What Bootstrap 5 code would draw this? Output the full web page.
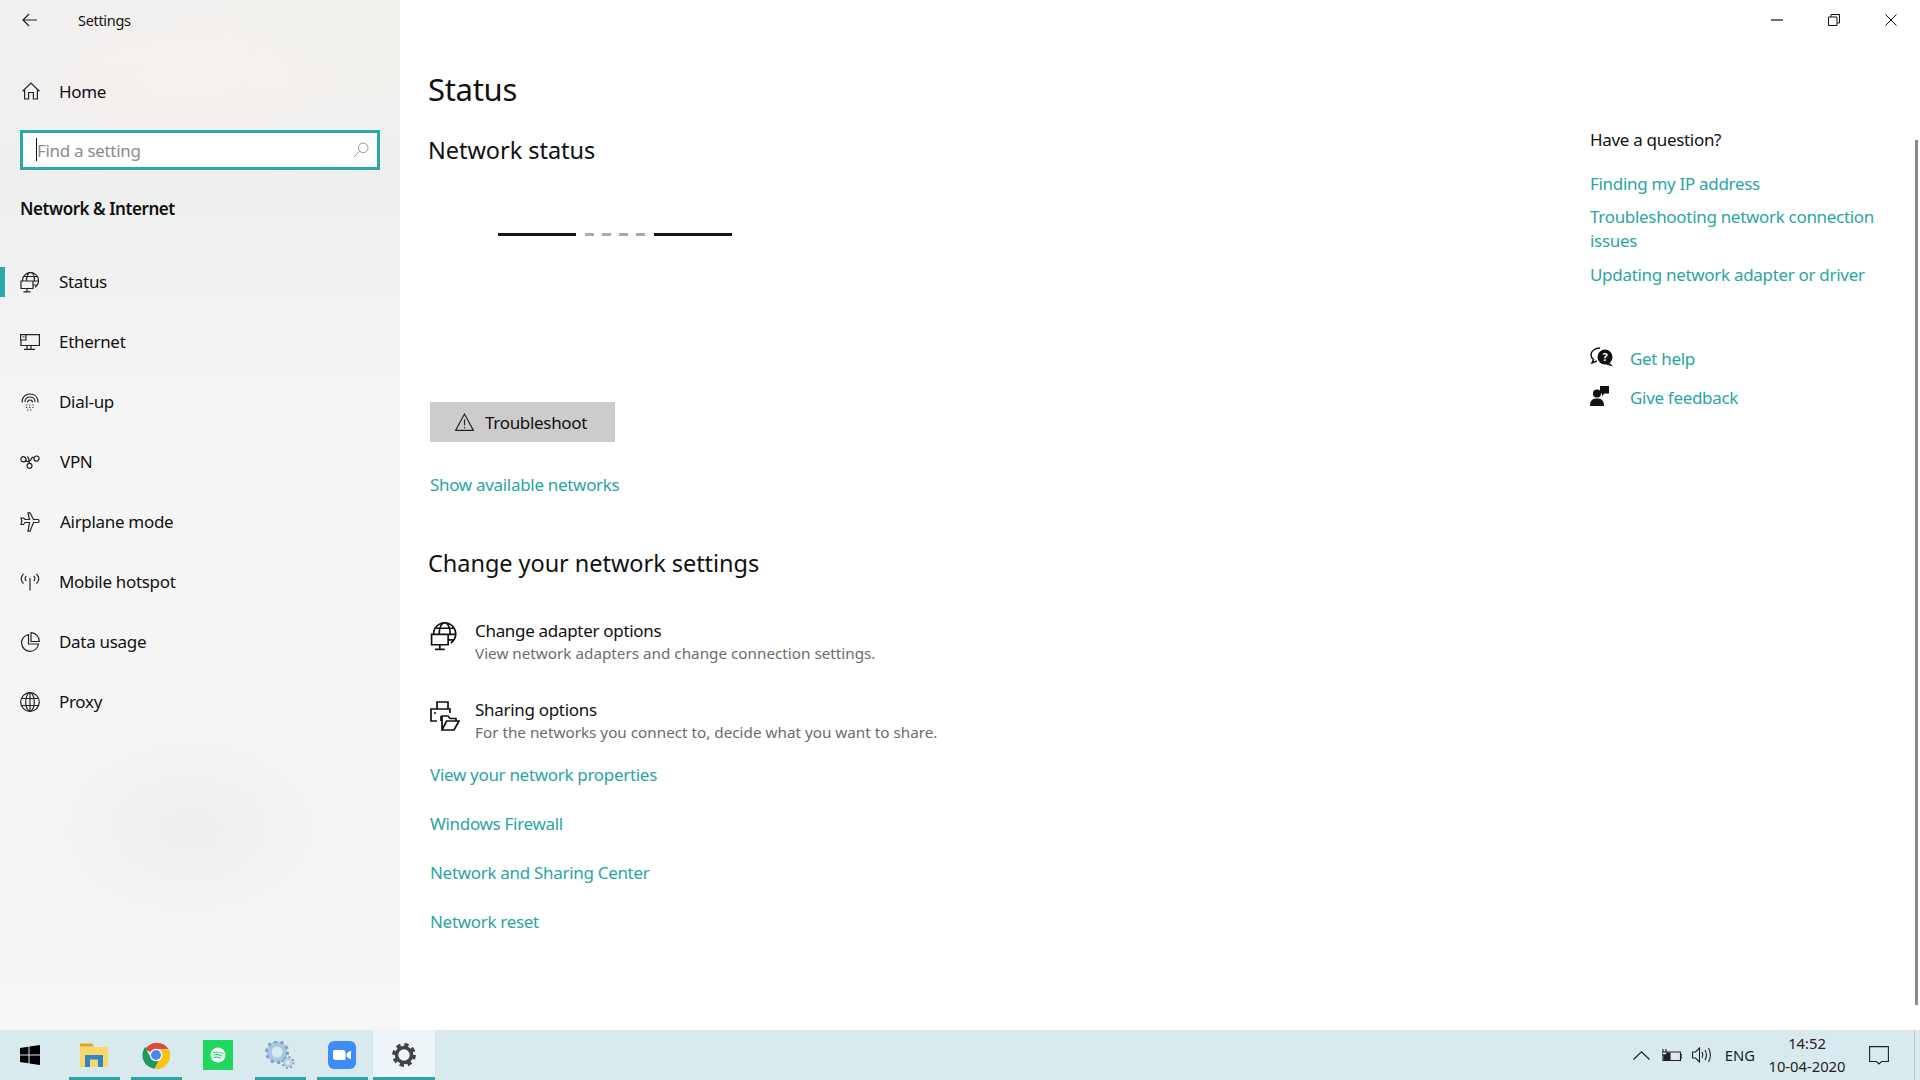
<!DOCTYPE html>
<html lang="en">
<head>
<meta charset="utf-8">
<title>Settings</title>
<link href="https://cdn.jsdelivr.net/npm/bootstrap@5.3.0/dist/css/bootstrap.min.css" rel="stylesheet">
<style>
html,body{height:100%;overflow:hidden}
body{font-family:"Noto Sans","Open Sans","Liberation Sans",sans-serif;font-size:17px;color:#111;background:#fff;line-height:24px;letter-spacing:-.31px}
a{color:#2aa5a3;text-decoration:none}
.shell{width:1920px;height:1080px}
.upper{height:1030px}
.side{width:400px;flex:none;background:radial-gradient(ellipse 160px 110px at 190px 830px,#eeeeee,transparent),radial-gradient(ellipse 300px 120px at 190px 80px,#f6f1ee,transparent),radial-gradient(ellipse 180px 90px at 340px 30px,#f1f2ea,transparent),linear-gradient(180deg,#eff0f1 0,#eeefef 200px,#f5f5f5 420px,#f6f6f6 100%)}
.s-top{height:40px;padding-left:22px}
.s-top svg{margin-right:41px}
.s-top span{font-size:14.5px}
.s-home{height:30px;margin-top:37px;padding-left:22px}
.s-home svg{margin:-2px 19px 0 0}
.s-search{height:40px;width:360px;margin:23px 0 0 20px;border:3px solid #2aa9a6;background:#fff;padding:1px 8px 0 13px;font-size:17px;color:#8b8b8b}
.s-caret{width:1px;height:23px;background:#111;margin-top:-2px}
.s-search svg{margin-top:-2px}
.s-head{margin:25px 0 0 20px;height:28px;line-height:28px;font-weight:600;font-size:17px;letter-spacing:-.45px}
.s-list{margin-top:29px}
.s-item{height:60px;padding-left:20px;position:relative}
.s-item svg{margin-right:19px;flex:none}
.s-nudge span{margin-left:1px}
.s-on::before{content:"";position:absolute;left:0;top:15px;width:5px;height:30px;background:#2aa9a6}
.ico{stroke:#222;fill:none;stroke-width:1.2}
.m-wrap{min-width:0}
.m-bar{height:40px;padding-right:23px;gap:45px}
.m-body{padding-left:28px}
.m-col{width:1162px;flex:none}
.t-title{font-size:31px;line-height:50px;margin-top:24px;height:50px}
.t-sub{font-size:23.5px;line-height:36px;height:36px;letter-spacing:-.05px}
.t-net{margin-top:18px}
.wire{margin:65px 0 0 70px;height:3px;gap:9px}
.w-solid{width:78px;background:#151515}
.w-dash{width:60px;background:repeating-linear-gradient(90deg,#aaa 0 9px,transparent 9px 17px)}
.tb-btn{margin:166px 0 0 2px;width:185px;height:40px;background:#ccc;border-radius:0;border:0;color:#111;padding:1px 0 0 25px;font-size:17px;line-height:40px;letter-spacing:-.31px}
.tb-btn svg{margin:-2px 11px 0 0}
.lk{margin-left:2px;height:24px;display:block}
.lk-a{margin-top:31px}
.t-chg{margin-top:48px}
.opt{margin-left:2px;height:46px}
.opt svg{margin-right:17px;margin-top:4px;flex:none}
.opt-2 svg{margin-right:15px}
.opt-1{margin-top:37px}
.opt-2{margin-top:33px}
.opt-t{padding-top:1px;height:24px}
.opt small{display:block;font-size:15.25px;line-height:22px;color:#6b6b6b;letter-spacing:0}
.lk-b{margin-top:20px}
.lk-c{margin-top:25px}
.m-aside{width:315px;margin-left:0;flex:none}
.a-q{margin-top:88px}
.a-1{margin-top:20px}
.a-2{margin-top:9px;height:auto}
.a-3{margin-top:10px}
.a-help{margin-top:60px;height:24px}
.a-fb{margin-top:15px;height:24px}
.a-help svg,.a-fb svg{margin:0 16px 4px 0;flex:none}
.lk-r{display:block}
.vbar{width:3px;height:865px;margin-top:100px;margin-right:2px;background:#8a8a8a;flex:none}
.taskbar{height:50px;background:#d9eaee}
.cell{width:62px;height:50px;position:relative;flex:none}
.cell-first{width:63px;padding-right:3px}
.cell-run::after{content:"";position:absolute;left:6px;width:51px;bottom:0;height:3px;background:#2aa5a3}
.cell-act{background:#eef5f8}
.cell-act::after{left:0;width:100%}
.tray{padding-right:5px;font-size:14.75px;line-height:23px;color:#222;letter-spacing:0}
.tray-date{width:92px;margin:0 16px 0 0}
.tray-eng{margin:0 6px 0 13px}
.tray-sep{width:1px;height:50px;background:#b9c6ca;margin-left:25px}
.tray-g12{margin-right:12px}
.tray-g10{margin-right:10px}
</style>
</head>
<body>
<div class="shell d-flex flex-column">
  <div class="upper d-flex">
    <aside class="side d-flex flex-column">
      <div class="s-top d-flex align-items-center">
        <svg width="15" height="14" viewBox="0 0 15 14" class="ico"><path d="M15 7H1M7 1 1 7l6 6"/></svg>
        <span>Settings</span>
      </div>
      <div class="s-home d-flex align-items-center">
        <svg width="18" height="18" viewBox="0 0 18 18" class="ico"><path d="M0.6 9.200 9 1l8.400 8.200M2.600 7.500V17H6.600V10.500H11.400V17H15.400V7.500"/></svg>
        <span>Home</span>
      </div>
      <div class="s-search d-flex align-items-center">
        <span class="s-caret"></span><span class="flex-grow-1">Find a setting</span>
        <svg width="16" height="16" viewBox="0 0 16 16" fill="none" stroke="#999" stroke-width="1"><circle cx="10.200" cy="5.800" r="4.800"/><path d="M6.600 9.200 .8 15.200"/></svg>
      </div>
      <div class="s-head">Network &amp; Internet</div>
      <div class="s-list">
        <div class="s-item s-on d-flex align-items-center">
          <svg width="20" height="21" viewBox="0 0 20 21" class="ico"><path d="M2.500 9A8 8 0 1 1 15 15.200M1 9H13V16.500H1ZM7 16.500V19.800M3.500 19.800H10.500M6.500 9C6.500 4.500 8 .5 10.500 .5S14.500 4.500 14.500 9M4 4.500H17M13 9H18.500M13 13H17"/></svg>
          <span>Status</span>
        </div>
        <div class="s-item d-flex align-items-center">
          <svg width="20" height="16" viewBox="0 0 20 16" class="ico"><path d="M5 .6H19.400V11.500H1V6M7 11.500V15.400M11 11.500V15.400M4 15.400H15M.6.600H6V6H.6zM2.500 3H4.500"/></svg>
          <span>Ethernet</span>
        </div>
        <div class="s-item d-flex align-items-center">
          <svg width="20" height="18" viewBox="0 0 20 18" class="ico"><path d="M2 9.500C2 4 5.500 1 10 1s8 3 8 8.500M5 9c0-3 2-5 5-5s5 2 5 5M7.500 9.500C7.500 8 8.500 7 10 7s2.500 1 2.500 2.500"/><path stroke-dasharray="1.200 2" d="M6 12H14M6 14.500H14M7 17H13"/></svg>
          <span>Dial-up</span>
        </div>
        <div class="s-item s-nudge d-flex align-items-center">
          <svg width="20" height="14" viewBox="0 0 20 14" class="ico"><circle cx="3.400" cy="4.200" r="2.600"/><circle cx="16.500" cy="3.600" r="2.600"/><circle cx="9.500" cy="10.800" r="2.500"/><path d="M5.800 5.500C8 8 10.500 6 11.500 3.500 12 2.300 13 2 14 2.600M7.500 1.500C8.500 2.500 9 5 9.500 8.300"/></svg>
          <span>VPN</span>
        </div>
        <div class="s-item s-nudge d-flex align-items-center">
          <svg width="20" height="20" viewBox="0 0 20 20" class="ico"><path d="M8 .8H10L13.500 7.500H18C19.500 7.500 19.500 10.500 18 10.500H13.500L10 19.200H8L9.500 10.500H5L3.500 12.500H1L1.800 9 1 6H3.500L5 7.500H9.500Z"/></svg>
          <span>Airplane mode</span>
        </div>
        <div class="s-item d-flex align-items-center">
          <svg width="20" height="18" viewBox="0 0 20 18" class="ico"><path d="M10 5V17.500M3.500 .8C.4 4 .4 7.500 3.500 10.500M16.500 .8C19.600 4 19.600 7.500 16.500 10.500M6.300 3C4.700 4.500 4.700 6.500 6.300 8M13.700 3C15.300 4.500 15.300 6.500 13.700 8"/></svg>
          <span>Mobile hotspot</span>
        </div>
        <div class="s-item d-flex align-items-center">
          <svg width="20" height="20" viewBox="0 0 20 20" class="ico"><path d="M8.500 2.500A8.500 8.500 0 1 0 18.500 12H8.500ZM11 .7A8.500 8.500 0 0 1 19.300 9.500H11Z"/></svg>
          <span>Data usage</span>
        </div>
        <div class="s-item d-flex align-items-center">
          <svg width="20" height="20" viewBox="0 0 20 20" class="ico"><circle cx="10" cy="10" r="9.300"/><ellipse cx="10" cy="10" rx="4.300" ry="9.300"/><path d="M10 .7V19.300M1.500 6.500H18.500M1.500 13.500H18.500"/></svg>
          <span>Proxy</span>
        </div>
      </div>
    </aside>
    <main class="m-wrap flex-grow-1 d-flex flex-column">
      <div class="m-bar d-flex justify-content-end align-items-center">
        <svg width="12" height="2" viewBox="0 0 12 2"><path d="M0 1H12" stroke="#111" stroke-width="1.200"/></svg>
        <svg width="12" height="12" viewBox="0 0 12 12" fill="none" stroke="#111" stroke-width="1"><path d="M.5 3H9V11.500H.5ZM3 3V.5H11.500V9H9"/></svg>
        <svg width="12" height="12" viewBox="0 0 12 12" stroke="#111" stroke-width="1"><path d="M.5.500 11.500 11.500M11.500.500 .5 11.500"/></svg>
      </div>
      <div class="m-body d-flex flex-grow-1">
        <section class="m-col">
          <div class="t-title">Status</div>
          <div class="t-sub t-net">Network status</div>
          <div class="wire d-flex"><span class="w-solid"></span><span class="w-dash"></span><span class="w-solid"></span></div>
          <button type="button" class="btn tb-btn d-flex align-items-center">
            <svg width="19" height="18" viewBox="0 0 19 18" fill="none" stroke="#222" stroke-width="1.100"><path d="M9.500 1 18.400 17.400H.6Z"/><path d="M9.500 6.500V12.500M9.500 14V15.300"/></svg>
            <span>Troubleshoot</span>
          </button>
          <a class="lk lk-a" href="#">Show available networks</a>
          <div class="t-sub t-chg">Change your network settings</div>
          <div class="opt opt-1 d-flex">
            <svg width="28" height="29" viewBox="0 0 20 21" fill="none" stroke="#111" stroke-width="1.200"><path d="M2.500 9A8 8 0 1 1 15 15.200M1 9H13V16.500H1ZM7 16.500V19.800M3.500 19.800H10.500M6.500 9C6.500 4.500 8 .5 10.500 .5S14.500 4.500 14.500 9M4 4.500H17M13 9H18.500M13 13H17"/></svg>
            <div><div class="opt-t">Change adapter options</div><small>View network adapters and change connection settings.</small></div>
          </div>
          <div class="opt opt-2 d-flex">
            <svg width="30" height="30" viewBox="0 0 30 30" fill="none" stroke="#111" stroke-width="1.700"><path d="M7 8V1H18V8M7 20H1V8H20V12M4 12H6M11 15V20"/><path d="M12 29V15H18L20 17.500H26V20M12 29H24L29 20H16.500L12 29Z"/></svg>
            <div><div class="opt-t">Sharing options</div><small>For the networks you connect to, decide what you want to share.</small></div>
          </div>
          <a class="lk lk-b" href="#">View your network properties</a>
          <a class="lk lk-c" href="#">Windows Firewall</a>
          <a class="lk lk-c" href="#">Network and Sharing Center</a>
          <a class="lk lk-c" href="#">Network reset</a>
        </section>
        <section class="m-aside">
          <div class="a-q">Have a question?</div>
          <a class="lk-r a-1" href="#">Finding my IP address</a>
          <a class="lk-r a-2" href="#">Troubleshooting network connection issues</a>
          <a class="lk-r a-3" href="#">Updating network adapter or driver</a>
          <div class="a-help d-flex align-items-center">
            <svg width="24" height="20" viewBox="0 0 24 20"><path d="M10 1C5 1 1 4 1 8c0 2 1 3.500 2.500 4.500L2 16l5-2" fill="#fff" stroke="#111" stroke-width="1.500"/><circle cx="15" cy="10" r="7.500" fill="#111"/><path d="M19 15.500 23 19.500 16 17.500Z" fill="#111"/><text x="15" y="14" font-size="11" font-weight="700" fill="#fff" text-anchor="middle">?</text></svg>
            <a href="#">Get help</a>
          </div>
          <div class="a-fb d-flex align-items-center">
            <svg width="24" height="20" viewBox="0 0 24 20" fill="#111"><circle cx="7" cy="7.500" r="4"/><path d="M0 20C0 14 3 12.500 7 12.500S14 14 14 20ZM10 0H19V7.500H14.500L12 10V7.500H10Z"/></svg>
            <a href="#">Give feedback</a>
          </div>
        </section>
        <div class="vbar ms-auto"></div>
      </div>
    </main>
  </div>
  <footer class="taskbar d-flex align-items-center">
    <div class="cell cell-first d-flex align-items-center justify-content-center">
      <svg width="20" height="20" viewBox="0 0 20 20" fill="#000"><path d="M0 3 8.500 1.800V9.500H0ZM9.500 1.600 20 0V9.500H9.500ZM0 10.500H8.500V18.200L0 17ZM9.500 10.500H20V20L9.500 18.400Z"/></svg>
    </div>
    <div class="cell cell-run d-flex align-items-center justify-content-center">
      <svg width="28" height="24" viewBox="0 0 28 24"><path d="M0 2C0 1 .5 .5 1.500 .5H12L14 3.500H0Z" fill="#e2a612"/><path d="M0 4H26.500C27.500 4 28 4.500 28 5.500V22.500C28 23.500 27.500 24 26.500 24H1.500C.5 24 0 23.500 0 22.500Z" fill="#fbd668"/><path d="M5 12H23V24H18V16.500H10V24H5Z" fill="#2f86c9"/></svg>
    </div>
    <div class="cell cell-run d-flex align-items-center justify-content-center">
      <svg width="28" height="28" viewBox="0 0 28 28"><path d="M14 14 3.200 8.200A13.800 13.800 0 0 1 26.500 8H14Z" fill="#db4a3b"/><path d="M3.200 5.800A13.800 13.800 0 0 0 12.500 27.800L18 18 14 14 7 14Z" fill="#1e9c57"/><path d="M27 8.500H14L19.500 14 12.500 27.900A13.800 13.800 0 0 0 27 8.500Z" fill="#fbc217"/><circle cx="14" cy="14" r="6.300" fill="#fff"/><circle cx="14" cy="14" r="5" fill="#4b86ef"/></svg>
    </div>
    <div class="cell d-flex align-items-center justify-content-center">
      <svg width="30" height="30" viewBox="0 0 30 30"><rect width="30" height="30" fill="#20d760"/><circle cx="15" cy="15" r="7.500" fill="#fff"/><path d="M10.500 12.500C13.500 11.700 17 12 19.800 13.500M11 15C13.500 14.400 16.500 14.700 18.900 16M11.500 17.300C13.500 16.900 16 17.100 18 18.200" fill="none" stroke="#20d760" stroke-width="1.200" stroke-linecap="round"/></svg>
    </div>
    <div class="cell cell-run d-flex align-items-center justify-content-center">
      <svg width="30" height="28" viewBox="0 0 30 28"><circle cx="12" cy="11" r="8" fill="none" stroke="#a9c6e2" stroke-width="5"/><circle cx="12" cy="11" r="10.500" fill="none" stroke="#7f9fc0" stroke-width="3" stroke-dasharray="3 3.600"/><circle cx="23" cy="21.500" r="3.500" fill="none" stroke="#b8cfe4" stroke-width="2.600"/><circle cx="23" cy="21.500" r="5.500" fill="none" stroke="#7f9fc0" stroke-width="2" stroke-dasharray="2 2.300"/></svg>
    </div>
    <div class="cell cell-run d-flex align-items-center justify-content-center">
      <svg width="28" height="28" viewBox="0 0 28 28"><rect width="28" height="28" rx="6" fill="#3f8cf8"/><path d="M5 10.500C5 9.500 5.700 9 6.500 9H15C16.500 9 17.500 10 17.500 11.500V17.500C17.500 18.500 17 19 16 19H7.500C6 19 5 18 5 16.500ZM18.500 12.500 22 10C22.600 9.500 23 9.800 23 10.500V17.500C23 18.200 22.600 18.500 22 18L18.500 15.500Z" fill="#fff"/></svg>
    </div>
    <div class="cell cell-run cell-act d-flex align-items-center justify-content-center">
      <svg width="24" height="24" viewBox="0 0 24 24"><circle cx="12" cy="12" r="7.500" fill="none" stroke="#444" stroke-width="3.600"/><circle cx="12" cy="12" r="10" fill="none" stroke="#444" stroke-width="3.800" stroke-dasharray="4.200 3.650"/></svg>
    </div>
    <div class="tray ms-auto d-flex align-items-center">
      <svg class="tray-g12" width="17" height="9" viewBox="0 0 17 9" fill="none" stroke="#222" stroke-width="1.200"><path d="M.5 8.500 8.500 .8 16.500 8.500"/></svg>
      <svg class="tray-g10" width="20" height="14" viewBox="0 0 20 14" fill="none" stroke="#222" stroke-width="1.100"><path d="M5 4H18.500V12.500H1V7M18.500 6.500H20V10H18.500M1 1V4M4 1V4M0 4H5V7H0Z"/><path d="M5 5H8V12H2V7H5Z" fill="#222"/></svg>
      <svg width="20" height="16" viewBox="0 0 20 16" fill="none" stroke="#222" stroke-width="1.100"><path d="M.6 5H3.500L7.500 1V15L3.500 11H.6ZM10 5C11 7 11 9 10 11M13 3C14.700 6 14.700 10 13 13M16.500 1C19 5 19 11 16.500 15"/></svg>
      <span class="tray-eng">ENG</span>
      <div class="tray-date text-center"><div>14:52</div><div>10-04-2020</div></div>
      <svg width="20" height="19" viewBox="0 0 20 19" fill="none" stroke="#222" stroke-width="1.100"><path d="M.6.600H19.400V15.500H12.500L10 18 7.500 15.500H.6Z"/></svg>
      <span class="tray-sep"></span>
    </div>
  </footer>
</div>
<script src="https://cdn.jsdelivr.net/npm/bootstrap@5.3.0/dist/js/bootstrap.bundle.min.js"></script>
</body>
</html>
